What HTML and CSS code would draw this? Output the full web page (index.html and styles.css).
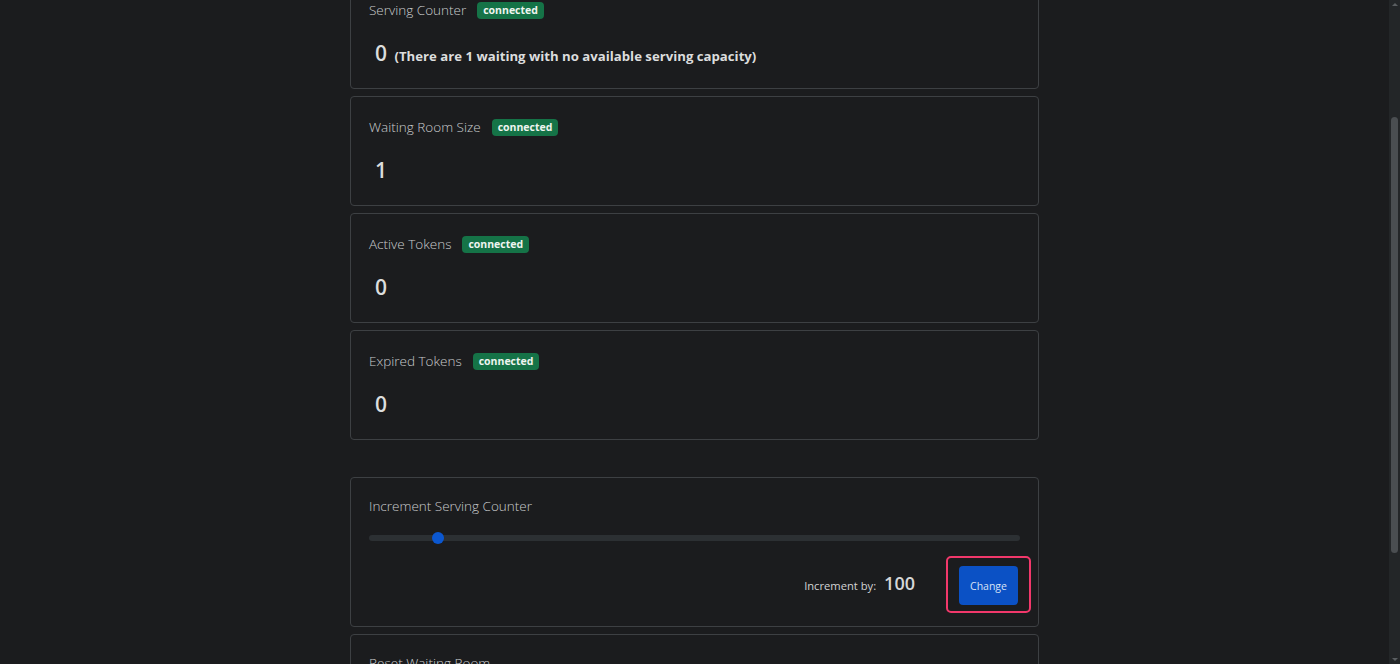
FILE: index.html
```html
<!DOCTYPE html>
<html lang="en">
<head>
    <meta charset="UTF-8">
    <meta name="viewport" content="width=device-width, initial-scale=1.0">
    <title>Waiting Room Admin</title>
    <link rel="stylesheet" href="styles.css">
</head>
<body>

    <div class="page">
        <main class="stack">

            <!-- Counters -->
            <section class="card card-first">
                <div class="card-head">
                    <span class="card-title">Serving Counter</span>
                    <span class="badge">connected</span>
                </div>
                <div class="card-value">0 <small>(There are 1 waiting with no available serving capacity)</small></div>
            </section>

            <section class="card">
                <div class="card-head">
                    <span class="card-title">Waiting Room Size</span>
                    <span class="badge">connected</span>
                </div>
                <div class="card-value">1</div>
            </section>

            <section class="card">
                <div class="card-head">
                    <span class="card-title">Active Tokens</span>
                    <span class="badge">connected</span>
                </div>
                <div class="card-value">0</div>
            </section>

            <section class="card">
                <div class="card-head">
                    <span class="card-title">Expired Tokens</span>
                    <span class="badge">connected</span>
                </div>
                <div class="card-value">0</div>
            </section>

            <!-- Controls -->
            <section class="card card-control">
                <div class="card-head">
                    <span class="card-title">Increment Serving Counter</span>
                </div>
                <div class="slider">
                    <div class="slider-track"></div>
                    <div class="slider-thumb"></div>
                </div>
                <div class="control-row">
                    <span class="control-label">Increment by:</span>
                    <span class="control-amount">100</span>
                    <div class="highlight">
                        <button class="btn-primary">Change</button>
                    </div>
                </div>
            </section>

            <section class="card card-control">
                <div class="card-head">
                    <span class="card-title">Reset Waiting Room</span>
                </div>
            </section>

        </main>

        <!-- scrollbar -->
        <div class="scrollbar">
            <div class="scroll-arrow up"></div>
            <div class="scroll-thumb"></div>
            <div class="scroll-arrow down"></div>
        </div>
    </div>

</body>
</html>
```

FILE: styles.css
```css
html, body {
    margin: 0;
    height: 100%;
    overflow: hidden;
}

body {
    background-color: #1b1c1e;
    color: #d6d7d8;
    font-family: "Open Sans", "Noto Sans", sans-serif;
}

.page {
    display: flex;
    height: 100vh;
}

.stack {
    flex: 1;
    display: flex;
    flex-direction: column;
    align-items: center;
    gap: 7px;
    margin-top: -21px;
    overflow: hidden;
}

.card {
    width: 651px;
    border: 1px solid #3d4043;
    border-radius: 4px;
    padding: 18px 18px 20px 18px;
}

.card-first {
    padding-bottom: 17px;
}

.card-head {
    display: flex;
    align-items: center;
    gap: 11px;
    height: 24px;
}

.card-title {
    font-size: 13.5px;
    font-weight: 300;
    color: #c9cbcd;
}

.badge {
    background-color: #157347;
    color: #eef5f0;
    font-size: 10.5px;
    font-weight: 700;
    padding: 2px 6px 2px 6px;
    border-radius: 4px;
    line-height: 13px;
}

.card-value {
    margin-top: 16px;
    padding-left: 6px;
    font-size: 21px;
    font-weight: 600;
    line-height: 30px;
    color: #dcdddd;
}

.card-value small {
    font-size: 13.2px;
    font-weight: 700;
    margin-left: 2px;
}

/* Control cards */
.card-control {
    padding-bottom: 13px;
}

.stack .card-control {
    margin-top: 30px;
}

.stack .card-control + .card-control {
    margin-top: 0;
    height: 80px;
}

.card-control .card-head {
    height: 20px;
}

.slider {
    position: relative;
    margin-top: 16px;
    height: 12px;
    display: flex;
    align-items: center;
}

.slider-track {
    flex: 1;
    height: 6px;
    border-radius: 3px;
    background-color: #2c3033;
}

.slider-thumb {
    position: absolute;
    left: 63px;
    top: 0;
    width: 12px;
    height: 12px;
    border-radius: 50%;
    background-color: #0b57d0;
}

.control-row {
    margin-top: 12px;
    display: flex;
    justify-content: flex-end;
    align-items: center;
}

.control-label {
    font-size: 11.2px;
    color: #d2d3d4;
    margin-top: 2px;
}

.control-amount {
    font-size: 18px;
    font-weight: 600;
    margin-left: 8px;
    margin-right: 31px;
    margin-top: -4px;
}

.highlight {
    border: 2px solid #f2386b;
    border-radius: 5px;
    padding: 8px 11px 6px 11px;
    margin-right: -11px;
}

.btn-primary {
    display: block;
    width: 59px;
    height: 39px;
    border: none;
    border-radius: 4px;
    background-color: #0b51c5;
    color: #d8e2f5;
    font-family: "Open Sans", sans-serif;
    font-size: 10.5px;
}

/* Fake window scrollbar */
.scrollbar {
    width: 11px;
    background-color: #232628;
    display: flex;
    flex-direction: column;
    align-items: center;
}

.scroll-arrow {
    width: 0;
    height: 0;
    border-left: 3px solid transparent;
    border-right: 3px solid transparent;
}

.scroll-arrow.up {
    margin-top: 3px;
    border-bottom: 3px solid #5a5e61;
}

.scroll-arrow.down {
    margin-top: auto;
    margin-bottom: 3px;
    border-top: 3px solid #5a5e61;
}

.scroll-thumb {
    width: 7px;
    height: 436px;
    margin-top: 111px;
    border-radius: 4px;
    background-color: #4a4e51;
}
```
